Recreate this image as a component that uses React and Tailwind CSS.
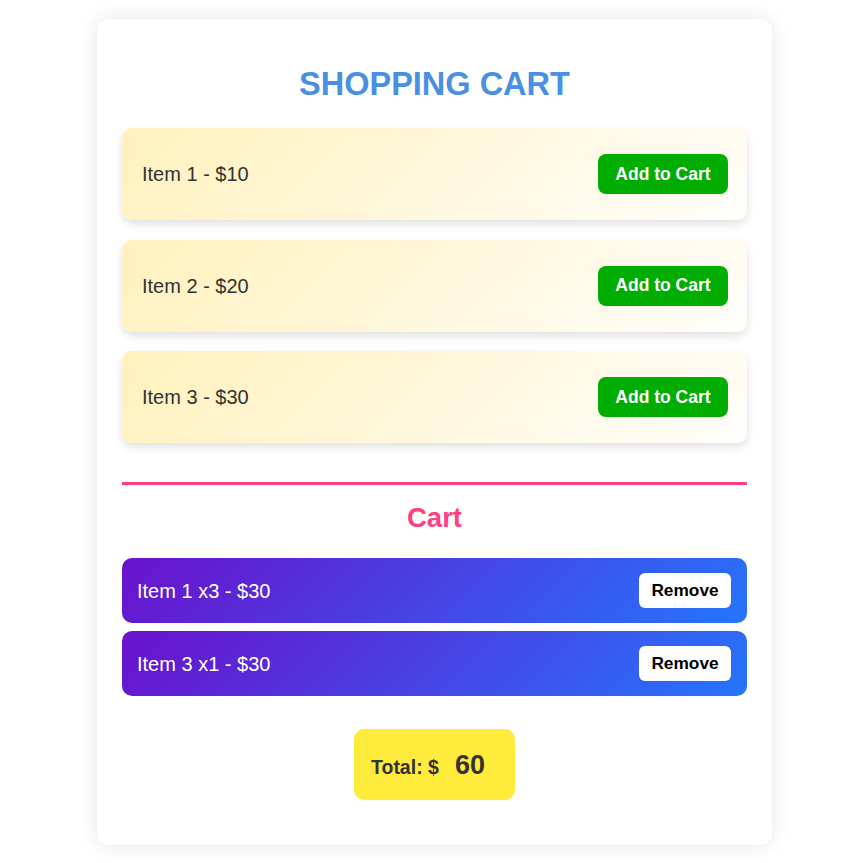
import React, { useState } from 'react';

const products = [
  { id: 1, name: 'Item 1', price: 10 },
  { id: 2, name: 'Item 2', price: 20 },
  { id: 3, name: 'Item 3', price: 30 },
];

export default function App() {
  const [cart, setCart] = useState([
    { id: 1, name: 'Item 1', price: 10, qty: 3 },
    { id: 3, name: 'Item 3', price: 30, qty: 1 },
  ]);

  const addToCart = (p) => {
    setCart((prev) => {
      const found = prev.find((c) => c.id === p.id);
      if (found) return prev.map((c) => (c.id === p.id ? { ...c, qty: c.qty + 1 } : c));
      return [...prev, { ...p, qty: 1 }];
    });
  };

  const removeFromCart = (id) => setCart((prev) => prev.filter((c) => c.id !== id));

  const total = cart.reduce((s, c) => s + c.price * c.qty, 0);

  return (
    <div className="min-h-screen bg-white font-['Liberation_Sans',Arial,sans-serif] pt-[19px] pb-[19px]">
      <div className="ml-[97px] w-[675px] bg-white rounded-[12px] shadow-[0_0_20px_rgba(0,0,0,0.1)] px-[25px] pt-[25px] pb-[45px]">
        <h1 className="mt-[22px] mb-[25px] text-center text-[32.5px] leading-[37px] font-bold text-[#4a90e2]">
          SHOPPING CART
        </h1>

        <div className="flex flex-col gap-[19.5px]">
          {products.map((p) => (
            <div
              key={p.id}
              className="h-[92px] flex items-center justify-between pl-[20px] pr-[19px] rounded-[10px] bg-[linear-gradient(135deg,#fff1bd,#fffefb)] shadow-[0_4px_8px_rgba(0,0,0,0.12)]"
            >
              <span className="text-[20px] text-[#333]">
                {p.name} - ${p.price}
              </span>
              <button
                onClick={() => addToCart(p)}
                className="w-[130px] h-[40px] rounded-[8px] bg-[#00ad00] text-white text-[17.5px] font-bold"
              >
                Add to Cart
              </button>
            </div>
          ))}
        </div>

        <div className="mt-[39px] h-[3px] bg-[#ff4081]" />

        <h2 className="mt-[18px] mb-[25px] text-center text-[27.5px] leading-[30px] font-bold text-[#ff4081]">
          Cart
        </h2>

        <div className="flex flex-col gap-[8px]">
          {cart.map((c) => (
            <div
              key={c.id}
              className="h-[65px] flex items-center justify-between pl-[15px] pr-[16px] rounded-[10px] bg-[linear-gradient(135deg,#6a11cb,#2575fc)]"
            >
              <span className="text-[20px] text-white">
                {c.name} x{c.qty} - ${c.price * c.qty}
              </span>
              <button
                onClick={() => removeFromCart(c.id)}
                className="w-[92px] h-[35px] rounded-[6px] bg-white text-black text-[17.3px] font-bold"
              >
                Remove
              </button>
            </div>
          ))}
        </div>

        <div className="mt-[33px] flex justify-center">
          <div className="w-[161px] h-[71px] rounded-[10px] bg-[#ffeb3b] flex items-center pl-[17px] text-[#333] font-bold">
            <div className="leading-none pt-[1px]">
              <span className="text-[19.5px]">Total: $</span>
              <span className="ml-[16px] text-[27px]">{total}</span>
            </div>
          </div>
        </div>
      </div>
    </div>
  );
}
